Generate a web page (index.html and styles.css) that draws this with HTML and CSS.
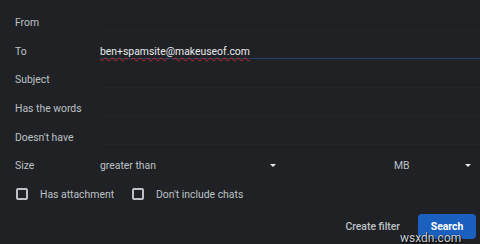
FILE: index.html
```html
<!DOCTYPE html>
<html lang="en">
<head>
    <meta charset="UTF-8">
    <title>Search filter</title>
    <link rel="stylesheet" href="styles.css">
</head>
<body>
<div class="panel">
    <div class="row">
        <span class="label">From</span>
        <span class="field"></span>
    </div>
    <div class="row">
        <span class="label">To</span>
        <span class="field active"><span class="typed">ben+spamsite@makeuseof.com</span></span>
    </div>
    <div class="row">
        <span class="label">Subject</span>
        <span class="field"></span>
    </div>
    <div class="row">
        <span class="label">Has the words</span>
        <span class="field"></span>
    </div>
    <div class="row">
        <span class="label">Doesn't have</span>
        <span class="field"></span>
    </div>
    <div class="row">
        <span class="label">Size</span>
        <div class="size">
            <span class="select wide">greater than<span class="caret"></span></span>
            <span class="gap"></span>
            <span class="select unit">MB<span class="caret"></span></span>
        </div>
    </div>
    <div class="row checks">
        <label class="check"><span class="box"></span>Has attachment</label>
        <label class="check"><span class="box"></span>Don't include chats</label>
    </div>
    <div class="actions">
        <span class="link-btn">Create filter</span>
        <span class="search-btn">Search</span>
    </div>
</div>
<span class="watermark">wsxdn.com</span>
</body>
</html>
```

FILE: styles.css
```css
body {
    margin: 0;
    width: 480px;
    height: 244px;
    overflow: hidden;
    background: #202124;
    font-family: Roboto, "Noto Sans", sans-serif;
    font-size: 10.4px;
    color: #bdc1c6;
    position: relative;
}

.panel {
    padding: 8px 0 0 15px;
}

.row {
    display: flex;
    align-items: center;
    height: 28.7px;
}

.label {
    width: 85px;
    flex: none;
}

.field {
    flex: 1;
    align-self: stretch;
    display: flex;
    align-items: center;
    box-sizing: border-box;
    padding-top: 1px;
    border-bottom: 1px solid #242528;
    margin-bottom: 6px;
    margin-top: 6px;
}

.field.active {
    border-bottom-color: #263f6b;
}

.typed {
    color: #e8eaed;
    text-decoration: underline wavy #c5221f;
    text-decoration-thickness: 1px;
    text-underline-offset: 2px;
}

.size {
    flex: 1;
    display: flex;
    align-self: stretch;
    padding-right: 5px;
}

.select {
    display: flex;
    align-items: center;
    justify-content: space-between;
    box-sizing: border-box;
    margin: 6px 0;
    border-bottom: 1px solid #232427;
    padding-top: 1px;
}

.wide {
    width: 180px;
}

.gap {
    flex: 1;
}

.unit {
    width: 81px;
}

.caret {
    width: 0;
    height: 0;
    border-left: 3px solid transparent;
    border-right: 3px solid transparent;
    border-top: 3px solid #e8eaed;
    margin-right: 4px;
}

.checks {
    padding-left: 1px;
}

.check {
    display: flex;
    align-items: center;
    margin-right: 18px;
}

.box {
    width: 8px;
    height: 8px;
    border: 2px solid #bdc1c6;
    border-radius: 2px;
    margin-right: 12px;
}

.actions {
    display: flex;
    justify-content: flex-end;
    align-items: center;
    padding: 5px 4px 0 0;
}

.link-btn {
    font-weight: 500;
    color: #bdc1c6;
    margin-right: 18px;
}

.search-btn {
    background: #1b5fbf;
    color: #fff;
    font-weight: 700;
    border-radius: 4px;
    width: 58px;
    height: 25px;
    display: flex;
    align-items: center;
    justify-content: center;
}

.watermark {
    position: absolute;
    left: 400px;
    top: 231px;
    font-size: 12px;
    color: #d0d4d9;
    text-shadow: 0 0 1px #000, 1px 1px 1px #000;
}
```
